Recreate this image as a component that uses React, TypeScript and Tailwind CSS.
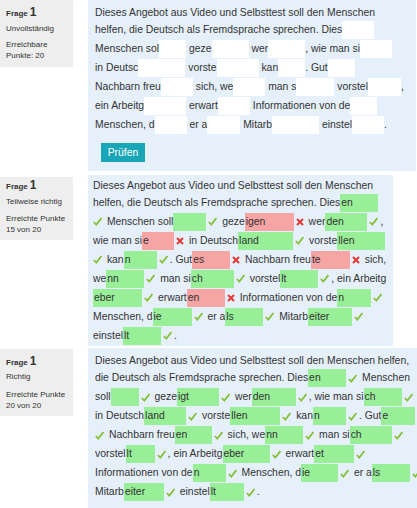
import React from "react";

type Fill = "w" | "g" | "r";
type Box = { w: number; t: string; c: Fill };
type Mark = { mark: "ok" | "no" };
type Seg = string | Box | Mark;

const OK: Mark = { mark: "ok" };
const NO: Mark = { mark: "no" };
const W = (w: number): Box => ({ w, t: "", c: "w" });
const G = (w: number, t = ""): Box => ({ w, t, c: "g" });
const R = (w: number, t = ""): Box => ({ w, t, c: "r" });

const fills: Record<Fill, string> = {
  w: "bg-white",
  g: "bg-[#98ef98]",
  r: "bg-[#f7a4a4]",
};

// lückentext, noch nicht abgeschickt
const open: Seg[][] = [
  ["Dieses Angebot aus Video und Selbsttest soll den Menschen"],
  ["helfen, die Deutsch als Fremdsprache sprechen. Dies", W(32)],
  ["Menschen sol", W(27), " geze", W(37), " wer", W(37), ", wie man si", W(32)],
  ["in Deutsc", W(47), " vorste", W(42), " kan", W(27), ". Gut", W(27)],
  ["Nachbarn freu", W(32), " sich, we", W(32), " man s", W(38), " vorstel", W(33), ","],
  ["ein Arbeitg", W(42), " erwart", W(32), " Informationen von de", W(27)],
  ["Menschen, d", W(32), " er a", W(33), " Mitarb", W(47), " einstel", W(32), "."],
];

const partly: Seg[][] = [
  ["Dieses Angebot aus Video und Selbsttest soll den Menschen"],
  ["helfen, die Deutsch als Fremdsprache sprechen. Dies", G(38, "en")],
  [OK, " Menschen soll", G(33), OK, " geze", R(49, "igen"), NO, " wer", G(42, "den"), OK, ","],
  ["wie man si", R(32, "e"), NO, " in Deutsch", G(55, "land"), OK, " vorste", G(48, "llen")],
  [OK, " kan", G(33, "n"), OK, ". Gut", R(38, "es"), NO, " Nachbarn freu", R(39, "te"), NO, " sich,"],
  ["we", G(38, "nn"), OK, " man si", G(43, "ch"), OK, " vorstel", G(38, "lt"), OK, ", ein Arbeitg"],
  [G(49, "eber"), OK, " erwart", R(38, "en"), NO, " Informationen von de", G(34, "n"), OK],
  ["Menschen, d", G(39, "ie"), OK, " er a", G(38, "ls"), OK, " Mitarb", G(44, "eiter"), OK],
  ["einstel", G(38, "lt"), OK, "."],
];

const full: Seg[][] = [
  ["Dieses Angebot aus Video und Selbsttest soll den Menschen helfen,"],
  ["die Deutsch als Fremdsprache sprechen. Dies", G(38, "en"), OK, " Menschen"],
  ["soll", G(28), OK, " geze", G(42, "igt"), OK, " wer", G(44, "den"), OK, ", wie man si", G(38, "ch"), OK],
  ["in Deutsch", G(42, "land"), OK, " vorste", G(50, "llen"), OK, " kan", G(33, "n"), OK, ". Gut", G(34, "e")],
  [OK, " Nachbarn freu", G(37, "en"), OK, " sich, we", G(38, "nn"), OK, " man si", G(42, "ch"), OK],
  ["vorstel", G(29, "lt"), OK, ", ein Arbeitg", G(47, "eber"), OK, " erwart", G(40, "et"), OK],
  ["Informationen von de", G(33, "n"), OK, " Menschen, d", G(37, "ie"), OK, " er a", G(38, "ls"), OK],
  ["Mitarb", G(40, "eiter"), OK, " einstel", G(34, "lt"), OK, "."],
];

const Check = ({ first }: { first: boolean }) => (
  <svg
    width="9"
    height="9"
    viewBox="0 0 9 9"
    className={first ? "shrink-0 mr-[2px]" : "shrink-0 mx-[2px]"}
  >
    <path d="M0.8 5 L3.3 7.6 L8.4 1" fill="none" stroke="#86c03c" strokeWidth="1.8" />
  </svg>
);

const Cross = () => (
  <svg width="8" height="8" viewBox="0 0 8 8" className="shrink-0 mx-[2px]">
    <path d="M1 1 L7 7 M7 1 L1 7" stroke="#e53935" strokeWidth="2" />
  </svg>
);

function Line({ segs, first }: { segs: Seg[]; first: boolean }) {
  return (
    <div className={first ? "flex items-center whitespace-pre h-[15px]" : "flex items-center whitespace-pre h-[19px]"}>
      {segs.map((s, i) => {
        if (typeof s === "string") return <span key={i}>{s}</span>;
        if ("mark" in s)
          return s.mark === "ok" ? <Check key={i} first={i === 0} /> : <Cross key={i} />;
        return (
          <span
            key={i}
            className={`inline-block shrink-0 h-[18px] leading-[18px] px-[1px] ${fills[s.c]}`}
            style={{ width: s.w }}
          >
            {s.t}
          </span>
        );
      })}
    </div>
  );
}

function Info({
  status,
  label,
  points,
  box,
}: {
  status: string;
  label: string;
  points: string;
  box: { wrap: string; status: string; points: string };
}) {
  return (
    <div className={`w-[73px] shrink-0 bg-[#eeeeee] px-[6px] ${box.wrap}`}>
      <div className="flex items-baseline gap-[2px] h-[13px] leading-[13px]">
        <span className="text-[8px] font-bold">Frage</span>
        <span className="text-[12px] font-bold">1</span>
      </div>
      <div className={`text-[8px] leading-[10px] ${box.status}`}>{status}</div>
      <div className={`text-[8px] leading-[11px] ${box.points}`}>
        <div>{label}</div>
        <div>{points}</div>
      </div>
    </div>
  );
}

export default function App() {
  return (
    <div className="min-h-screen bg-white text-[#333333] font-['Liberation_Sans',Arial,sans-serif] overflow-hidden">
      {/* Frage 1 – offen */}
      <div className="flex items-start">
        <Info
          status="Unvollständig"
          label="Erreichbare"
          points="Punkte: 20"
          box={{ wrap: "pt-[6px] pb-[6.5px]", status: "mt-[5px]", points: "mt-[4.5px]" }}
        />
        <div className="ml-[15px] w-[328px] bg-[#e6f0fa] pt-[5px] pl-[7px] pb-[9px] text-[10.4px]">
          {open.map((l, i) => (
            <Line key={i} segs={l} first={i === 0} />
          ))}
          <button className="mt-[9px] ml-[6px] h-[19px] w-[44px] bg-[#19a6b6] text-white text-[10.4px]">
            Prüfen
          </button>
        </div>
      </div>

      {/* Frage 1 – teilweise richtig */}
      <div className="flex items-start mt-[4px]">
        <Info
          status="Teilweise richtig"
          label="Erreichte Punkte"
          points="15 von 20"
          box={{ wrap: "mt-[2px] pt-[2px] pb-[5.5px]", status: "mt-[4.5px]", points: "mt-[6px]" }}
        />
        <div className="ml-[15px] w-[305px] bg-[#e6f0fa] pt-[3px] pl-[5px] pb-[1px] text-[10.4px]">
          {partly.map((l, i) => (
            <Line key={i} segs={l} first={i === 0} />
          ))}
        </div>
      </div>

      {/* Frage 1 – richtig */}
      <div className="flex items-start mt-[2px]">
        <Info
          status="Richtig"
          label="Erreichte Punkte"
          points="20 von 20"
          box={{ wrap: "mt-[1px] pt-[5.5px] pb-[5px]", status: "mt-[4px]", points: "mt-[7px]" }}
        />
        <div className="ml-[15px] w-[329px] bg-[#e6f0fa] pt-[5.5px] pl-[7px] pb-[6px] text-[10.4px]">
          {full.map((l, i) => (
            <Line key={i} segs={l} first={i === 0} />
          ))}
        </div>
      </div>
    </div>
  );
}
